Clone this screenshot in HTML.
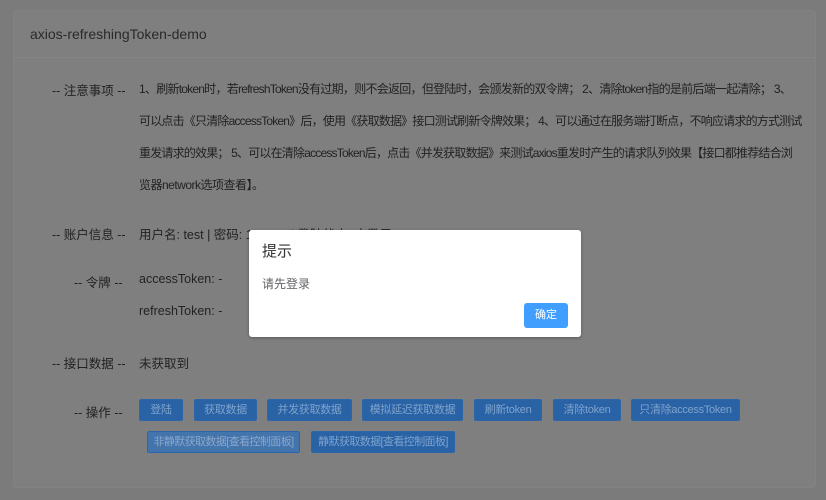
<!DOCTYPE html>
<html><head><meta charset="utf-8"><style>
body{margin:0;width:826px;height:500px;background:#7b7b7b;font-family:"Liberation Sans","Noto Sans CJK SC",sans-serif;position:relative;overflow:hidden;color:#2a2a2a}
.card{position:absolute;left:13px;top:10px;width:803px;height:478px;background:#7f7f7f;border:1px solid #838383;box-sizing:border-box;border-radius:4px}
.hd{height:46px;border-bottom:1px solid #858585;padding-left:16px;line-height:46px;font-size:14px;color:#2a2a2a}
.btn{position:absolute;height:22px;line-height:21px;background:#2a62a6;color:#7ea3cc;font-size:11px;text-align:center;border-radius:2px;border:1px solid #2d65a8;box-sizing:border-box;white-space:nowrap;overflow:hidden;letter-spacing:-0.3px}
.dis{background:#4474ac;color:#8aa8cc}
.dlg{position:absolute;left:249px;top:230px;width:332px;height:107px;background:#fff;border-radius:3px;box-shadow:0 1px 3px rgba(0,0,0,.3)}
.ln{position:absolute;left:139px;width:652px;white-space:nowrap;text-align:justify;text-align-last:justify;font-size:12px;letter-spacing:-0.8px}
</style></head><body>
<div class="card"><div class="hd">axios-refreshingToken-demo</div></div>
<div style="position:absolute;left:13px;top:0;width:803px;font-size:12.5px;color:#222">
<div style="position:absolute;left:39px;top:80px;white-space:nowrap">-- 注意事项 --</div>
<div style="position:absolute;left:39px;top:224px;white-space:nowrap">-- 账户信息 --</div>
<div style="position:absolute;left:126px;top:224px;white-space:nowrap">用户名: test | 密码: 123456 | 登陆状态: 未登录</div>
<div style="position:absolute;left:61px;top:272px;white-space:nowrap">-- 令牌 --</div>
<div style="position:absolute;left:126px;top:272px;white-space:nowrap">accessToken: -</div>
<div style="position:absolute;left:126px;top:304px;white-space:nowrap">refreshToken: -</div>
<div style="position:absolute;left:39px;top:353px;white-space:nowrap">-- 接口数据 --</div>
<div style="position:absolute;left:126px;top:353px;white-space:nowrap">未获取到</div>
<div style="position:absolute;left:61px;top:402px;white-space:nowrap">-- 操作 --</div>
</div>
<div style="color:#222">
<div class="ln" style="top:80px">1、刷新token时，若refreshToken没有过期，则不会返回，但登陆时，会颁发新的双令牌； 2、清除token指的是前后端一起清除； 3、</div>
<div class="ln" style="top:112px;width:659px">可以点击《只清除accessToken》后，使用《获取数据》接口测试刷新令牌效果； 4、可以通过在服务端打断点，不响应请求的方式测试</div>
<div class="ln" style="top:144px">重发请求的效果； 5、可以在清除accessToken后，点击《并发获取数据》来测试axios重发时产生的请求队列效果【接口都推荐结合浏</div>
<div style="position:absolute;left:139px;top:176px;font-size:12px;white-space:nowrap;letter-spacing:-0.5px">览器network选项查看】。</div>
</div>
<div class="btn" style="left:139px;top:399px;width:44px">登陆</div>
<div class="btn" style="left:194px;top:399px;width:63px">获取数据</div>
<div class="btn" style="left:267px;top:399px;width:85px">并发获取数据</div>
<div class="btn" style="left:362px;top:399px;width:101px">模拟延迟获取数据</div>
<div class="btn" style="left:474px;top:399px;width:68px">刷新token</div>
<div class="btn" style="left:553px;top:399px;width:68px">清除token</div>
<div class="btn" style="left:631px;top:399px;width:109px">只清除accessToken</div>
<div class="btn dis" style="left:147px;top:431px;width:153px;letter-spacing:-0.6px">非静默获取数据[查看控制面板]</div>
<div class="btn" style="left:311px;top:431px;width:144px;letter-spacing:-0.6px">静默获取数据[查看控制面板]</div>
<div class="dlg">
<div style="position:absolute;left:13px;top:10px;font-size:15px;color:#303133">提示</div>
<div style="position:absolute;left:13px;top:45px;font-size:12px;color:#606266">请先登录</div>
<div style="position:absolute;left:275px;top:73px;width:44px;height:25px;line-height:25px;background:#409eff;color:#fff;font-size:11px;text-align:center;border-radius:3px">确定</div>
</div>
</body></html>
